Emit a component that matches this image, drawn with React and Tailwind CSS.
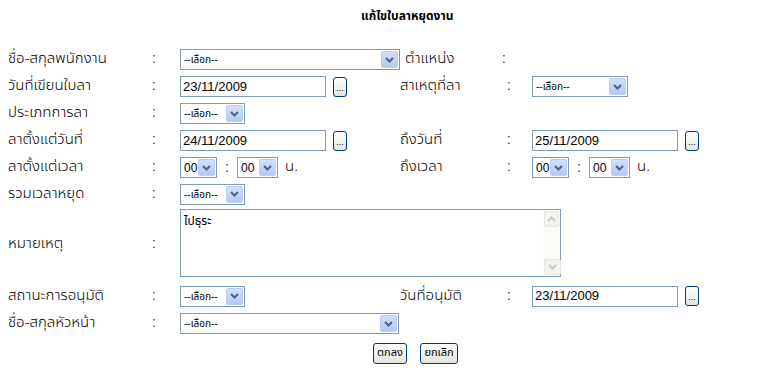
import React from "react";

const Arrow = ({ dim }) => (
  <div
    className={`h-full w-[17px] flex items-center justify-center rounded-[2px] border ${
      dim
        ? "border-[#e6e6dc] bg-[#f3f3ee]"
        : "border-[#b9cdf7] bg-gradient-to-b from-[#d3e0fb] to-[#b3c8f5]"
    }`}
  >
    <svg width="9" height="6" viewBox="0 0 9 6">
      <path
        d="M1 1 L4.5 4.5 L8 1"
        fill="none"
        stroke={dim ? "#c9c9bd" : "#4d6185"}
        strokeWidth="2"
      />
    </svg>
  </div>
);

const Select = ({ w, text = "--เลือก--", small = true }) => (
  <div
    className="h-[21px] flex items-stretch border border-[#7f9db9] bg-white p-[1px] font-normal"
    style={{ width: w, fontFamily: "'Liberation Sans', 'Noto Sans Thai', sans-serif" }}
  >
    <span
      className={`flex-1 flex items-center pl-[2px] text-black ${
        small ? "text-[10px]" : "text-[12px]"
      }`}
    >
      {text}
    </span>
    <Arrow />
  </div>
);

const DateInput = ({ value }) => (
  <div className="flex items-center font-normal" style={{ fontFamily: "'Liberation Sans', sans-serif" }}>
    <div className="w-[146px] h-[21px] border border-[#7f9db9] bg-white flex items-center pl-[2px] text-[13px] text-black">
      {value}
    </div>
    <div className="ml-[7px] w-[14px] h-[20px] rounded-[3px] border border-[#003c74] bg-gradient-to-b from-white to-[#e3e3db] flex items-end justify-center pb-[3px] text-[9px] leading-none text-black">
      ...
    </div>
  </div>
);

const Time = () => (
  <div className="flex items-center">
    <Select w={37} text="00" small={false} />
    <span className="w-[20px] text-center text-[14px]">:</span>
    <Select w={41} text="00" small={false} />
    <span className="ml-[7px] text-[15px]">น.</span>
  </div>
);

const Row = ({ label, children, right, rlabel, h = "h-[27px]" }) => (
  <div className={`flex items-center ${h}`}>
    <div className="w-[152px] pl-[8px]">{label}</div>
    <div className="w-[28px]">:</div>
    <div className="w-[220px] flex items-center">{children}</div>
    {rlabel && (
      <>
        <div className="w-[107px]">{rlabel}</div>
        <div className="w-[25px]">:</div>
        <div className="flex items-center">{right}</div>
      </>
    )}
  </div>
);

export default function App() {
  return (
    <div
      className="w-[769px] h-[378px] bg-white text-[15px] font-light text-black overflow-hidden"
      style={{ fontFamily: "'Noto Sans Thai', 'Noto Sans', sans-serif" }}
    >
      <div className="pt-[7px] pl-[361px] h-[46px] text-[12px] font-bold">
        แก้ไขใบลาหยุดงาน
      </div>

      <div className="flex items-center h-[27px]">
        <div className="w-[152px] pl-[8px]">ชื่อ-สกุลพนักงาน</div>
        <div className="w-[28px]">:</div>
        <Select w={220} />
        <div className="w-[102px] pl-[5px]">ตำแหน่ง</div>
        <div>:</div>
      </div>

      <Row
        label="วันที่เขียนใบลา"
        rlabel="สาเหตุที่ลา"
        right={<Select w={96} />}
      >
        <DateInput value="23/11/2009" />
      </Row>

      <Row label="ประเภทการลา">
        <Select w={65} />
      </Row>

      <Row
        label="ลาตั้งแต่วันที่"
        rlabel="ถึงวันที่"
        right={<DateInput value="25/11/2009" />}
      >
        <DateInput value="24/11/2009" />
      </Row>

      <Row label="ลาตั้งแต่เวลา" rlabel="ถึงเวลา" right={<Time />}>
        <Time />
      </Row>

      <Row label="รวมเวลาหยุด" h="h-[26px]">
        <Select w={65} />
      </Row>

      <div className="flex items-center h-[75px]">
        <div className="w-[152px] pl-[8px]">หมายเหตุ</div>
        <div className="w-[28px]">:</div>
        <div className="w-[381px] h-[68px] mt-[-4px] border border-[#7f9db9] bg-white flex">
          <div className="flex-1 pl-[3px] pt-[2px] text-[12px] font-normal">ไปธุระ</div>
          <div className="w-[17px] flex flex-col justify-between bg-[#fbfbf8] p-[1px]">
            <div className="h-[16px] border border-[#e6e6dc] bg-[#f3f3ee] rounded-[2px] flex items-center justify-center">
              <svg width="9" height="6" viewBox="0 0 9 6">
                <path d="M1 5 L4.5 1.5 L8 5" fill="none" stroke="#c9c9bd" strokeWidth="2" />
              </svg>
            </div>
            <div className="h-[16px]">
              <Arrow dim />
            </div>
          </div>
        </div>
      </div>

      <Row
        label="สถานะการอนุมัติ"
        rlabel="วันที่อนุมัติ"
        right={<DateInput value="23/11/2009" />}
        h="h-[28px]"
      >
        <Select w={65} />
      </Row>

      <Row label="ชื่อ-สกุลหัวหน้า">
        <Select w={219} />
      </Row>

      <div className="flex items-center h-[33px] pl-[373px] gap-[13px] text-[11px] font-normal">
        <div className="w-[34px] h-[21px] rounded-[3px] border border-[#003c74] bg-gradient-to-b from-white to-[#e3e3db] flex items-center justify-center">
          ตกลง
        </div>
        <div className="w-[38px] h-[21px] rounded-[3px] border border-[#003c74] bg-gradient-to-b from-white to-[#e3e3db] flex items-center justify-center">
          ยกเลิก
        </div>
      </div>
    </div>
  );
}
